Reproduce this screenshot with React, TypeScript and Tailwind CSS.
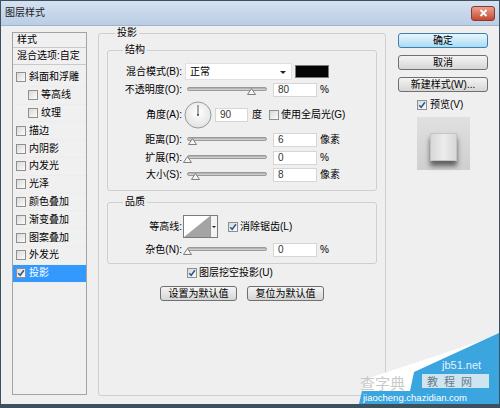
import React from "react";

const cjk = "font-['Liberation_Sans','Noto_Sans_CJK_SC',sans-serif]";

function Check({ checked = false }: { checked?: boolean }) {
  return (
    <span className="flex h-[10px] w-[10px] shrink-0 items-center justify-center border border-[#8f8f8f] bg-gradient-to-br from-[#d9d9d9] to-[#fbfbfb]">
      {checked && (
        <svg viewBox="0 0 8 8" className="h-[8px] w-[8px]">
          <path d="M1.2 4.2 L3.2 6.3 L6.9 1.3" fill="none" stroke="#2a5a96" strokeWidth="1.5" />
        </svg>
      )}
    </span>
  );
}

function Slider({ thumb }: { thumb: string }) {
  return (
    <div className="relative h-[14px] w-[80px] shrink-0">
      <div className="absolute left-0 right-0 top-[4px] h-[4px] rounded-full border border-[#9a9a9a] bg-gradient-to-b from-[#a8a8a8] to-[#dcdcdc]" />
      <svg className={`absolute top-[5px] ${thumb}`} width="9" height="7" viewBox="0 0 9 7">
        <path d="M4.5 0.5 L8.5 6.5 L0.5 6.5 Z" fill="#f6f6f6" stroke="#7d7d7d" />
      </svg>
    </div>
  );
}

function Field({ value, width }: { value: string; width: string }) {
  return (
    <div className={`flex h-[14px] shrink-0 items-center border border-[#d6d6d6] bg-white pl-[4px] text-[10px] text-[#333] ${width}`}>
      {value}
    </div>
  );
}

function Label({ text }: { text: string }) {
  return <span className="w-[74px] shrink-0 text-right">{text}</span>;
}

function SliderRow({ label, thumb, value, unit, extra }: { label: string; thumb: string; value: string; unit: string; extra: string }) {
  return (
    <div className={`flex h-[14px] items-center ${extra}`}>
      <Label text={label} />
      <div className="ml-[5px]">
        <Slider thumb={thumb} />
      </div>
      <div className="ml-[6px]">
        <Field value={value} width="w-[44px]" />
      </div>
      <span className="ml-[3px]">{unit}</span>
    </div>
  );
}

function Button({ children, primary = false, width }: { children: React.ReactNode; primary?: boolean; width: string }) {
  return (
    <div
      className={`flex h-[15px] items-center justify-center rounded-[3px] border text-[10px] text-black ${width} ${
        primary
          ? "border-[#3c7fb1] bg-gradient-to-b from-[#eaf6fd] to-[#a9dcf6]"
          : "border-[#707070] bg-gradient-to-b from-[#f4f4f4] to-[#d6d6d6]"
      }`}
    >
      {children}
    </div>
  );
}

const styles: { name: string; indent?: boolean; checked?: boolean }[] = [
  { name: "斜面和浮雕" },
  { name: "等高线", indent: true },
  { name: "纹理", indent: true },
  { name: "描边" },
  { name: "内阴影" },
  { name: "内发光" },
  { name: "光泽" },
  { name: "颜色叠加" },
  { name: "渐变叠加" },
  { name: "图案叠加" },
  { name: "外发光" },
  { name: "投影", checked: true },
];

export default function App() {
  return (
    <div className={`relative flex h-[408px] w-[500px] flex-col overflow-hidden border-x border-t border-b-[4px] border-[#3d5060] bg-[#f0eff0] text-[10px] leading-none text-black ${cjk}`}>
      {/* title bar */}
      <div className="flex h-[25px] shrink-0 items-center justify-between border-b border-[#9fb4cc] bg-gradient-to-b from-[#d5e2f1] to-[#b9cde4] pl-[4px] pr-[4px]">
        <span className="text-[10px] text-[#1b1b1b]">图层样式</span>
        <div className="flex h-[15px] w-[24px] items-center justify-center rounded-[3px] border border-[#8a3a2c] bg-gradient-to-b from-[#e8a291] to-[#c4472f]">
          <svg width="9" height="8" viewBox="0 0 9 8">
            <path d="M1.5 1 L7.5 7 M7.5 1 L1.5 7" stroke="#fff" strokeWidth="1.8" />
          </svg>
        </div>
      </div>

      <div className="flex flex-1 items-start">
        {/* styles list */}
        <div className="ml-[11px] mt-[6px] flex h-[363px] w-[75px] shrink-0 flex-col border border-[#a3a3a3] bg-[#f1f0f1]">
          <div className="flex h-[15px] items-center border-b border-[#c9c9c9] pl-[4px]">样式</div>
          <div className="flex h-[17px] items-center border-b border-[#c9c9c9] pl-[4px]">混合选项:自定</div>
          <div className="mt-[4px] flex flex-col">
            {styles.map((s) => (
              <div
                key={s.name}
                className={`flex h-[17.8px] items-center gap-[3px] border-b border-[#ececec] ${s.indent ? "pl-[15px]" : "pl-[3px]"} ${
                  s.checked ? "bg-[#3399ff] text-white" : ""
                }`}
              >
                <Check checked={s.checked} />
                <span>{s.name}</span>
              </div>
            ))}
          </div>
        </div>

        {/* drop shadow group */}
        <div className="relative ml-[11px] mt-[7px] h-[363px] w-[288px] shrink-0 rounded-[3px] border border-[#cfcfcf] px-[8px] pt-[16px]">
          <span className="absolute -top-[6px] left-[16px] bg-[#f0eff0] px-[2px]">投影</span>

          {/* structure */}
          <div className="relative flex h-[141px] flex-col rounded-[3px] border border-[#cfcfcf] pt-[12px]">
            <span className="absolute -top-[6px] left-[15px] bg-[#f0eff0] px-[2px]">结构</span>
            <div className="flex h-[17px] items-center">
              <Label text="混合模式(B):" />
              <div className="relative ml-[3px] flex h-[17px] w-[107px] items-center border border-[#e0e0e0] bg-white pl-[4px]">
                正常
                <svg className="absolute right-[5px] top-[7px]" width="6" height="3" viewBox="0 0 6 3">
                  <path d="M0 0 H6 L3 3 Z" fill="#222" />
                </svg>
              </div>
              <div className="ml-[3px] h-[13px] w-[34px] border border-[#7b7b7b] bg-[#050505]" />
            </div>
            <SliderRow label="不透明度(O):" thumb="left-[60px]" value="80" unit="%" extra="mt-[3px]" />
            <div className="mt-[4px] flex h-[28px] items-center">
              <Label text="角度(A):" />
              <svg className="ml-[2px] shrink-0" width="28" height="28" viewBox="0 0 28 28">
                <defs>
                  <radialGradient id="dial" cx="50%" cy="40%" r="60%">
                    <stop offset="0%" stopColor="#ffffff" />
                    <stop offset="100%" stopColor="#e2e2e2" />
                  </radialGradient>
                </defs>
                <circle cx="14" cy="14" r="13" fill="url(#dial)" stroke="#9a9a9a" />
                <line x1="14" y1="14" x2="14" y2="4" stroke="#555" strokeWidth="1" />
                <circle cx="14" cy="14" r="1" fill="#444" />
              </svg>
              <div className="ml-[3px]">
                <Field value="90" width="w-[33px]" />
              </div>
              <span className="ml-[4px]">度</span>
              <div className="ml-[7px]">
                <Check />
              </div>
              <span className="ml-[2px]">使用全局光(G)</span>
            </div>
            <SliderRow label="距离(D):" thumb="left-[1px]" value="6" unit="像素" extra="mt-[4px]" />
            <SliderRow label="扩展(R):" thumb="-left-[4px]" value="0" unit="%" extra="mt-[4px]" />
            <SliderRow label="大小(S):" thumb="left-[4px]" value="8" unit="像素" extra="mt-[3px]" />
          </div>

          {/* quality */}
          <div className="relative mt-[11px] flex h-[62px] flex-col rounded-[3px] border border-[#cfcfcf] pt-[12px]">
            <span className="absolute -top-[6px] left-[15px] bg-[#f0eff0] px-[2px]">品质</span>
            <div className="flex h-[23px] items-center">
              <Label text="等高线:" />
              <div className="ml-[1px] flex h-[23px] border border-[#7b7b7b] bg-white">
                <svg width="26" height="21" viewBox="0 0 26 21">
                  <path d="M0 21 L26 0 L26 21 Z" fill="#a4a4a4" />
                </svg>
                <div className="flex w-[7px] items-center justify-center border-l border-[#9a9a9a] bg-[#f4f4f4]">
                  <svg width="4" height="2" viewBox="0 0 4 2">
                    <path d="M0 0 H4 L2 2 Z" fill="#222" />
                  </svg>
                </div>
              </div>
              <div className="ml-[10px]">
                <Check checked />
              </div>
              <span className="ml-[2px]">消除锯齿(L)</span>
            </div>
            <SliderRow label="杂色(N):" thumb="-left-[4px]" value="0" unit="%" extra="mt-[5px]" />
          </div>

          <div className="ml-[80px] mt-[3px] flex h-[12px] items-center gap-[2px]">
            <Check checked />
            <span>图层挖空投影(U)</span>
          </div>
          <div className="mt-[7px] flex justify-center gap-[10px]">
            <Button width="w-[77px]">设置为默认值</Button>
            <Button width="w-[77px]">复位为默认值</Button>
          </div>
        </div>

        {/* right column */}
        <div className="ml-[12px] mt-[7px] flex w-[90px] shrink-0 flex-col">
          <Button primary width="w-full">确定</Button>
          <div className="mt-[7px]">
            <Button width="w-full">取消</Button>
          </div>
          <div className="mt-[7px]">
            <Button width="w-full">新建样式(W)...</Button>
          </div>
          <div className="ml-[19px] mt-[8px] flex h-[10px] items-center gap-[3px]">
            <Check checked />
            <span>预览(V)</span>
          </div>
          <div className="ml-[19px] mt-[7px] flex h-[53px] w-[53px] items-center justify-center bg-gradient-to-b from-[#e0e0e0] to-[#cfcfcf]">
            <div className="mt-[6px] h-[28px] w-[27px] border border-[#c4c4c4] bg-gradient-to-r from-[#d8d8d8] via-[#ececec] to-[#d8d8d8] shadow-[0_5px_5px_rgba(0,0,0,0.55)]" />
          </div>
        </div>
      </div>

      {/* watermark */}
      <svg className="absolute bottom-0 right-0" width="145" height="72" viewBox="0 0 145 72">
        <polygon points="145,3 15,46 8,60 145,60" fill="#ffffff" />
        <polygon points="145,1 60,40 56,59 8,59 5,72 145,72" fill="#3aa5de" />
        <text x="88" y="37" fill="#e6f2fb" fontSize="11" fontFamily="Liberation Sans">jb51.net</text>
        <rect x="68" y="42" width="67" height="14" fill="#e9eef2" opacity="0.85" />
        <text x="73" y="54" fill="#66798a" fontSize="11" fontFamily="Noto Sans CJK SC" letterSpacing="6">教程网</text>
        <text x="6" y="57" fill="#c9c9c9" fontSize="15" fontFamily="Noto Sans CJK SC">查字典</text>
        <text x="9" y="69" fill="#ffffff" fontSize="9.5" fontFamily="Liberation Sans">jiaocheng.chazidian.com</text>
      </svg>
    </div>
  );
}
